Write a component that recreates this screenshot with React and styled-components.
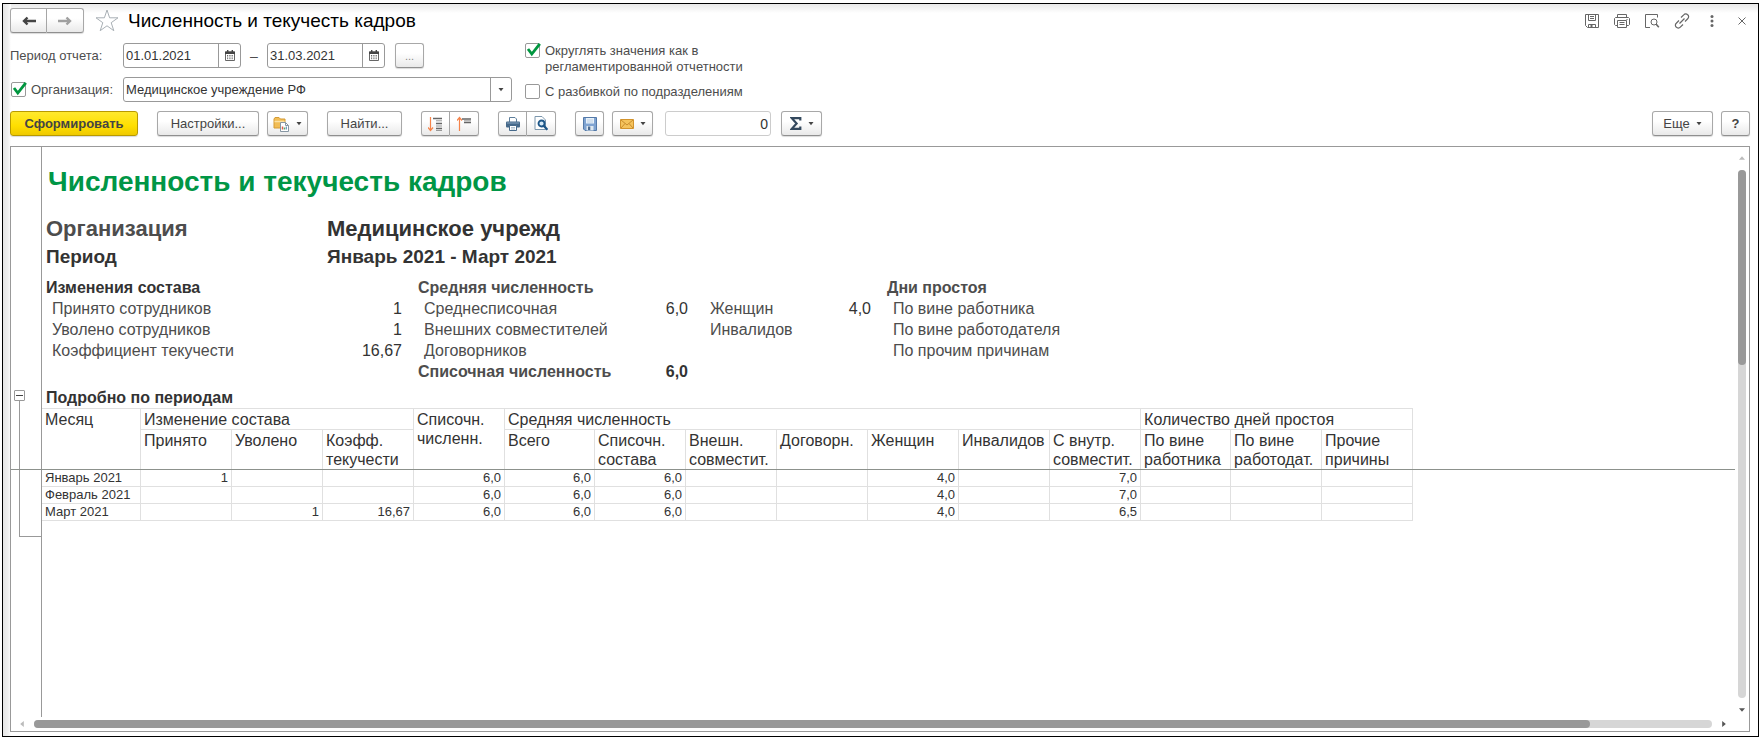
import React, { useState } from 'react'
import styled, { createGlobalStyle, css } from 'styled-components'

const GlobalStyle = createGlobalStyle`
	* {
		box-sizing: border-box;
	}

	body {
		margin: 0;
		background: #fff;
		color: #333;
		font: 14px/16px "Liberation Sans", Arial, sans-serif;
	}

	button, input, select {
		font: inherit;
		color: inherit;
	}
`

const COLUMNS = [99, 91, 91, 91, 91, 90, 91, 91, 91, 91, 91, 91, 90, 91, 91]

const SUBHEADS = [
	['Принято'],
	['Уволено'],
	['Коэфф.', 'текучести'],
	['Всего'],
	['Списочн.', 'состава'],
	['Внешн.', 'совместит.'],
	['Договорн.'],
	['Женщин'],
	['Инвалидов'],
	['С внутр.', 'совместит.'],
	['По вине', 'работника'],
	['По вине', 'работодат.'],
	['Прочие', 'причины'],
]

const ROWS = [
	['Январь 2021', '1', '', '', '6,0', '6,0', '6,0', '', '', '4,0', '', '7,0', '', '', ''],
	['Февраль 2021', '', '', '', '6,0', '6,0', '6,0', '', '', '4,0', '', '7,0', '', '', ''],
	['Март 2021', '', '1', '16,67', '6,0', '6,0', '6,0', '', '', '4,0', '', '6,5', '', '', ''],
]

const ArrowIcon = ({ back }) =>
	<svg width="16" height="12" viewBox="0 0 16 12">
		<path
			d={back ? 'M15 6H3M6.500 2.500L3 6l3.500 3.500' : 'M1 6h12M9.500 2.500L13 6l-3.500 3.500'}
			fill="none" stroke={back ? '#444' : '#a0a0a0'} strokeWidth="2.400"
		/>
	</svg>

const StarIcon = () =>
	<svg width="24" height="23" viewBox="0 0 24 23">
		<path d="M12 1l2.600 7.800h8.400l-6.800 4.900 2.600 8-6.800-4.900-6.800 4.900 2.600-8L1 8.800h8.400z" fill="#fff" stroke="#a9b0b5" />
	</svg>

const CalendarIcon = () =>
	<svg width="10" height="11" viewBox="0 0 10 11">
		<path d="M.5 2h9v8.500h-9z" fill="#fff" stroke="#666" />
		<path d="M0 1.500h10V4H0zM2 0h1.400v2H2zM6.600 0H8v2H6.600z" fill="#444" />
		<path d="M2 5.500h6M2 7h6M2 8.700h6" stroke="#555" strokeWidth=".9" strokeDasharray="1.200 1.100" />
	</svg>

const Caret = () =>
	<svg width="6" height="4" viewBox="0 0 6 4">
		<path d="M.5 0h5L3 3.200z" fill="#444" />
	</svg>

const CheckMark = () =>
	<svg width="16" height="16" viewBox="0 0 16 16">
		<path d="M3 6l3.800 5L14.800.8" fill="none" stroke="#00963f" strokeWidth="2.800" />
	</svg>

const FolderIcon = () =>
	<svg width="17" height="16" viewBox="0 0 17 16">
		<path d="M1 12V3l1-1.500h4L7.500 3H12v9z" fill="#f2bd55" stroke="#d49b35" />
		<path d="M1.500 5.500h10" stroke="#fbe1a4" strokeWidth="1.500" />
		<path d="M7.500 6.500h5l3 3v6h-8z" fill="#fff" stroke="#8796a3" />
		<path d="M12.500 6.500v3h3" fill="none" stroke="#8796a3" />
		<path d="M9.500 13.500v-3" stroke="#e0604d" strokeWidth="1.500" />
		<path d="M11.500 13.500v-2" stroke="#5aa469" strokeWidth="1.500" />
		<path d="M13.300 13.500v-3" stroke="#4d83b5" />
	</svg>

const ExpandIcon = () =>
	<svg width="15" height="16" viewBox="0 0 15 16">
		<path d="M2.500 1v13.500M0 11.500l2.500 3 2.500-3" fill="none" stroke="#f5834a" strokeWidth="1.200" />
		<path d="M5 2.500h9M8 7.500h6M8 12.500h6" stroke="#666" strokeWidth="1.400" />
		<path d="M8 4.800h6M8 10h6M8 14.500h6" stroke="#999" />
	</svg>

const CollapseIcon = () =>
	<svg width="15" height="16" viewBox="0 0 15 16">
		<path d="M2.500 15V1.500M0 4.500l2.500-3 2.500 3" fill="none" stroke="#f5834a" strokeWidth="1.200" />
		<path d="M5 3h9M7 6.500h7" stroke="#666" strokeWidth="1.400" />
		<path d="M7 4.800h7" stroke="#999" />
	</svg>

const PrinterIcon = () =>
	<svg width="14" height="14" viewBox="0 0 14 14">
		<path d="M3.500 5V.5h5.500l1.500 1.500v3" fill="#fff" stroke="#5d7e9b" />
		<rect y="4.500" width="14" height="6" rx="1" fill="#46698a" />
		<path d="M1 6h12" stroke="#86a4bf" />
		<path d="M3.500 8.500h7v5h-7z" fill="#fff" stroke="#46698a" />
		<path d="M5 10.500h4M5 12h4" stroke="#9fb2c3" strokeWidth=".8" />
	</svg>

const PreviewIcon = () =>
	<svg width="14" height="15" viewBox="0 0 14 15">
		<path d="M1 .500h7l3.500 3.500v9.500H1z" fill="#fff" stroke="#7c97ad" />
		<circle cx="7.500" cy="7.500" r="3" fill="#d5e9f7" stroke="#1c5688" strokeWidth="1.800" />
		<path d="M9.800 9.800l3.600 4" stroke="#1c5688" strokeWidth="2.400" />
	</svg>

const FloppyIcon = () =>
	<svg width="14" height="14" viewBox="0 0 14 14">
		<path d="M.500.500h13v13H2L.500 12z" fill="#7fa3d1" stroke="#5379a8" />
		<path d="M3 1h8v5.500H3z" fill="#e7f1fa" />
		<path d="M4 3h6M4 5h6" stroke="#b6c9dc" strokeWidth=".8" />
		<path d="M3.500 9h7v4.500h-7z" fill="#dfe8f0" />
		<path d="M5 9.500h2.300v3.500H5z" fill="#4b6a90" />
	</svg>

const MailIcon = () =>
	<svg width="14" height="10" viewBox="0 0 14 10">
		<path d="M.500.500h13v9H.500z" fill="#f5c35c" stroke="#d3942d" />
		<path d="M1 1l6 5 6-5M1 9l4-4.500M13 9L9 4.500" fill="none" stroke="#c98d2c" />
	</svg>

const SigmaIcon = () =>
	<svg width="12" height="13" viewBox="0 0 12 13">
		<path d="M10.300 3.500V1.200H1.800L6.600 6.500l-4.800 5.300h8.500V9.500" fill="none" stroke="#34495e" strokeWidth="2.200" />
	</svg>

const TitleSave = () =>
	<svg width="16" height="16" viewBox="0 0 16 16" fill="none" stroke="#666">
		<path d="M1.500 1.500h13v13h-11l-2-2zM4.500 1.500v6h7v-6M6 3.500h4M6 5.500h4M4.500 14.500v-3h7v3" />
		<path d="M6.500 12h2v2h-2z" fill="#666" stroke="none" />
	</svg>

const TitlePrint = () =>
	<svg width="16" height="16" viewBox="0 0 16 16" fill="none" stroke="#666">
		<path d="M3.500 4.500v-3h9v3M3.500 12.500h-2l-1-1v-6l1-1h13l1 1v6l-1 1h-2" />
		<path d="M3.500 7.500h9v7h-9zM5.500 9.500h5M5.500 11.500h5M12.500 6.500h1" />
	</svg>

const TitlePreview = () =>
	<svg width="16" height="16" viewBox="0 0 16 16" fill="none" stroke="#666">
		<path d="M6 14.500H1.500v-13h12v3" />
		<circle cx="10" cy="9" r="3" />
		<path d="M12 11l2.800 3.300" strokeWidth="1.600" />
	</svg>

const TitleLink = () =>
	<svg width="16" height="16" viewBox="0 0 16 16" fill="none" stroke="#666" strokeWidth="1.200">
		<path d="M5.500 10.500l5-5M7 4.500l2.700-2.700a2.600 2.600 0 0 1 4 0 2.600 2.600 0 0 1 0 4L11 8.500M9 11.500l-2.700 2.700a2.600 2.600 0 0 1-4 0 2.600 2.600 0 0 1 0-4L5 7.500" />
	</svg>

const TitleMore = () =>
	<svg width="16" height="16" viewBox="0 0 16 16" fill="#666">
		<circle cx="8" cy="3.500" r="1.500" />
		<circle cx="8" cy="8" r="1.500" />
		<circle cx="8" cy="12.500" r="1.500" />
	</svg>

const TitleClose = () =>
	<svg width="16" height="16" viewBox="0 0 16 16" fill="none" stroke="#666">
		<path d="M4.500 4.500l7 7M11.500 4.500l-7 7" />
	</svg>

const Check = ({ id, label, defaultChecked }) => {
	const [checked, setChecked] = useState(Boolean(defaultChecked))

	return (
		<CheckRow htmlFor={id}>
			<CheckBox>
				<input id={id} type="checkbox" checked={checked} onChange={() => setChecked(!checked)} />
				{checked && <CheckMark />}
			</CheckBox>
			<span>{label}</span>
		</CheckRow>
	)
}

const DateField = ({ label, value }) =>
	<DateBox>
		<input type="text" aria-label={label} defaultValue={value} />
		<button type="button" aria-label="Выбрать дату"><CalendarIcon /></button>
	</DateBox>

const Stat = ({ label, value, strong }) =>
	<StatRow $strong={strong}>
		<dt>{label}</dt>
		<dd>{value}</dd>
	</StatRow>

const Report = () =>
	<Sheet>
		<Gutter />
		<Summary>
			<ReportTitle>Численность и текучесть кадров</ReportTitle>
			<Param $size={22} $soft><span>Организация</span><b>Медицинское учрежд</b></Param>
			<Param $size={19}><span>Период</span><b>Январь 2021 - Март 2021</b></Param>
			<Blocks>
				<Block $width={356}>
					<h3>Изменения состава</h3>
					<dl>
						<Stat label="Принято сотрудников" value="1" />
						<Stat label="Уволено сотрудников" value="1" />
						<Stat label="Коэффициент текучести" value="16,67" />
					</dl>
				</Block>
				<Block $width={270} $soft>
					<h3>Средняя численность</h3>
					<dl>
						<Stat label="Среднесписочная" value="6,0" />
						<Stat label="Внешних совместителей" />
						<Stat label="Договорников" />
						<Stat label="Списочная численность" value="6,0" strong />
					</dl>
				</Block>
				<Block $width={167}>
					<h3>&nbsp;</h3>
					<dl>
						<Stat label="Женщин" value="4,0" />
						<Stat label="Инвалидов" />
					</dl>
				</Block>
				<Block $width={200} $soft>
					<h3>Дни простоя</h3>
					<dl>
						<Stat label="По вине работника" />
						<Stat label="По вине работодателя" />
						<Stat label="По прочим причинам" />
					</dl>
				</Block>
			</Blocks>
		</Summary>
		<Gutter>
			<Toggle type="button" aria-label="Свернуть группу" />
			<Bracket />
		</Gutter>
		<Details>
			<h2>Подробно по периодам</h2>
			<TableHolder>
				<Table>
					<colgroup>
						{COLUMNS.map((width, i) => <col key={i} style={{ width }} />)}
					</colgroup>
					<thead>
						<tr>
							<th rowSpan="2">Месяц</th>
							<th colSpan="3">Изменение состава</th>
							<th rowSpan="2">Списочн.<br />численн.</th>
							<th colSpan="7">Средняя численность</th>
							<th colSpan="3">Количество дней простоя</th>
						</tr>
						<tr>
							{SUBHEADS.map((lines, i) =>
								<th key={i}>{lines[0]}{lines[1] && <><br />{lines[1]}</>}</th>
							)}
						</tr>
					</thead>
					<tbody>
						{ROWS.map(row =>
							<tr key={row[0]}>
								{row.map((cell, i) => <td key={i}>{cell}</td>)}
							</tr>
						)}
					</tbody>
				</Table>
				<FreezeLine />
			</TableHolder>
		</Details>
		<Gutter />
	</Sheet>

const App = () =>
	<Window>
		<GlobalStyle />
		<TitleBar>
			<Group>
				<Button type="button" $width={37} aria-label="Назад"><ArrowIcon back /></Button>
				<Button type="button" $width={37} aria-label="Вперед"><ArrowIcon /></Button>
			</Group>
			<Bare type="button" $size={24} aria-label="В избранное"><StarIcon /></Bare>
			<h1>Численность и текучесть кадров</h1>
			<TitleTools>
				<Bare type="button" aria-label="Сохранить"><TitleSave /></Bare>
				<Bare type="button" aria-label="Печать"><TitlePrint /></Bare>
				<Bare type="button" aria-label="Просмотр"><TitlePreview /></Bare>
				<Bare type="button" aria-label="Ссылка"><TitleLink /></Bare>
				<Bare type="button" aria-label="Еще"><TitleMore /></Bare>
				<Bare type="button" aria-label="Закрыть"><TitleClose /></Bare>
			</TitleTools>
		</TitleBar>
		<Filters>
			<Fields>
				<Field>
					<FieldName>Период отчета:</FieldName>
					<DateField label="Начало периода" value="01.01.2021" />
					<Dash>–</Dash>
					<DateField label="Конец периода" value="31.03.2021" />
					<Button type="button" $width={29} $dim>...</Button>
				</Field>
				<Field>
					<FieldName><Check id="by-org" label="Организация:" defaultChecked /></FieldName>
					<Picker>
						<select aria-label="Организация">
							<option>Медицинское учреждение РФ</option>
						</select>
						<i><Caret /></i>
					</Picker>
				</Field>
			</Fields>
			<Options>
				<Check id="round" label={<>Округлять значения как в<br />регламентированной отчетности</>} defaultChecked />
				<Check id="split" label="С разбивкой по подразделениям" />
			</Options>
		</Filters>
		<Toolbar>
			<Button type="button" $width={128} $primary>Сформировать</Button>
			<Button type="button" $width={102}>Настройки...</Button>
			<Button type="button" $width={41} $near aria-label="Варианты"><FolderIcon /><Caret /></Button>
			<Button type="button" $width={75}>Найти...</Button>
			<Group>
				<Button type="button" $width={29} aria-label="Развернуть"><ExpandIcon /></Button>
				<Button type="button" $width={29} aria-label="Свернуть"><CollapseIcon /></Button>
			</Group>
			<Group>
				<Button type="button" $width={29} aria-label="Печать"><PrinterIcon /></Button>
				<Button type="button" $width={29} aria-label="Просмотр"><PreviewIcon /></Button>
			</Group>
			<Button type="button" $width={29} aria-label="Сохранить"><FloppyIcon /></Button>
			<Button type="button" $width={41} $near aria-label="Отправить"><MailIcon /><Caret /></Button>
			<Total type="text" aria-label="Сумма" defaultValue="0" />
			<Button type="button" $width={41} $near aria-label="Функция"><SigmaIcon /><Caret /></Button>
			<Spacer />
			<Button type="button" $width={61}>Еще<Caret /></Button>
			<Button type="button" $width={29} $near $bold>?</Button>
		</Toolbar>
		<Frame>
			<Report />
			<VScroll>
				<Tip $dir="up" $off />
				<Track><Thumb $part={37} /></Track>
				<Tip $dir="down" />
			</VScroll>
			<HScroll>
				<Tip $dir="left" $off />
				<Track $flat><Thumb $part={92.7} /></Track>
				<Tip $dir="right" />
			</HScroll>
		</Frame>
	</Window>

const Window = styled.main`
	display: flex;
	flex-direction: column;
	min-height: calc(100vh - 3px);
	margin: 3px 0 0 2px;
	padding: 4px 8px 4px 7px;
	border: 1px solid #000;
	background:
		linear-gradient(90deg, #e6e6e6, #f0f0f0 5px, #fff 8px) left / 8px 100% no-repeat,
		linear-gradient(180deg, #e9e9e9, #fff) top / 100% 9px no-repeat,
		#fff;
`
const TitleBar = styled.header`
	display: flex;
	align-items: center;
	height: 25px;

	h1 {
		margin: 0 0 0 9px;
		font-weight: 400;
		font-size: 19px;
		line-height: 24px;
		color: #000;
	}
`
const TitleTools = styled.div`
	display: flex;
	gap: 14px;
	margin-left: auto;
`
const Bare = styled.button`
	display: flex;
	align-items: center;
	justify-content: center;
	width: ${({ $size = 16 }) => $size}px;
	margin: 0 0 0 ${({ $size }) => $size ? 11 : 0}px;
	padding: 0;
	border: 0;
	background: none;
`
const Button = styled.button`
	display: flex;
	align-items: center;
	justify-content: center;
	gap: 6px;
	width: ${({ $width }) => $width}px;
	height: 25px;
	margin-left: ${({ $near }) => $near ? -11 : 0}px;
	padding: 0;
	border: 1px solid #a8a8a8;
	border-bottom-color: #8f8f8f;
	border-radius: 3px;
	background: linear-gradient(#fff 40%, #e9e9e9);
	box-shadow: 0 1px 1px rgba(0, 0, 0, .15);
	color: ${({ $dim }) => $dim ? '#888' : '#444'};
	font-size: ${({ $dim }) => $dim ? 11 : 13}px;
	font-weight: ${({ $bold }) => $bold ? 700 : 400};

	${({ $primary }) => $primary && css`
		border-color: #b89a00;
		background: linear-gradient(#ffe92e, #ffdf00 60%, #efc900);
		font-weight: 700;
	`}
`
const Group = styled.div`
	display: flex;

	${Button}:first-child {
		border-radius: 3px 0 0 3px;
	}

	${Button}:last-child {
		border-left: 0;
		border-radius: 0 3px 3px 0;
	}
`
const Filters = styled.section`
	display: flex;
	gap: 12px;
	margin-top: 10px;
	color: #4d4d4d;
`
const Fields = styled.div`
	display: flex;
	flex-direction: column;
	gap: 9px;
	width: 502px;
`
const Field = styled.div`
	display: flex;
	align-items: center;

	> ${Button} {
		margin-left: 10px;
	}
`
const FieldName = styled.div`
	width: 113px;
	font-size: 13px;
	white-space: nowrap;
`
const Options = styled.div`
	display: flex;
	flex-direction: column;
	gap: 9px;
	font-size: 13px;
`
const CheckRow = styled.label`
	display: flex;
	align-items: flex-start;
	gap: 5px;
`
const CheckBox = styled.span`
	position: relative;
	flex: none;
	width: 16px;
	height: 15px;

	input {
		display: block;
		appearance: none;
		width: 15px;
		height: 15px;
		margin: 0 0 0 1px;
		border: 1px solid #999;
		border-radius: 2px;
		background: #fff;
	}

	svg {
		position: absolute;
		top: 0;
		left: 1px;
		pointer-events: none;
	}
`
const boxed = css`
	height: 25px;
	border: 1px solid #999;
	border-radius: 3px;
	background: #fff;
	color: #333;
`
const DateBox = styled.div`
	${boxed}
	display: flex;
	width: 118px;

	input {
		flex: 1;
		min-width: 0;
		padding: 0 0 0 2px;
		border: 0;
		background: none;
		font-size: 13px;
	}

	button {
		display: flex;
		align-items: center;
		justify-content: center;
		width: 22px;
		padding: 0;
		border: 0;
		border-left: 1px solid #999;
		background: none;
	}
`
const Dash = styled.span`
	width: 26px;
	text-align: center;
`
const Picker = styled.div`
	${boxed}
	position: relative;
	flex: 1;

	select {
		appearance: none;
		width: 100%;
		height: 100%;
		padding: 0 24px 0 2px;
		border: 0;
		background: none;
		font-size: 13px;
	}

	i {
		position: absolute;
		top: 0;
		right: 0;
		bottom: 0;
		display: flex;
		align-items: center;
		justify-content: center;
		width: 21px;
		border-left: 1px solid #999;
		pointer-events: none;
	}
`
const Toolbar = styled.div`
	display: flex;
	gap: 19px;
	margin: 9px 0 10px;
`
const Total = styled.input`
	${boxed}
	width: 106px;
	margin: 0 2px 0 -7px;
	padding: 0 2px;
	border-color: #ccc;
	text-align: right;
`
const Spacer = styled.div`
	flex: 1;
`
const Frame = styled.section`
	flex: 1;
	display: grid;
	grid-template: 1fr 14px / 1fr 14px;
	border: 1px solid #999;
	background: #fff;
`
const Sheet = styled.article`
	display: grid;
	grid-template: auto auto 1fr / 31px 1fr;
	min-width: 0;
`
const Gutter = styled.div`
	display: flex;
	flex-direction: column;
	grid-column: 1;
	border-right: 1px solid #999;
`
const Toggle = styled.button`
	width: 11px;
	height: 11px;
	margin: 3px 0 0 3px;
	padding: 0;
	border: 1px solid #999;
	border-radius: 1px;
	background: linear-gradient(#444, #444) center / 7px 1px no-repeat #fff;
`
const Bracket = styled.div`
	flex: 1;
	margin-left: 8px;
	border: solid #999;
	border-width: 0 0 1px 1px;
`
const Summary = styled.div`
	padding: 19px 0 5px 4px;
`
const ReportTitle = styled.h2`
	margin: 0 0 17px 2px;
	font-size: 28px;
	line-height: 32px;
	color: #009646;
`
const Param = styled.div`
	display: flex;
	font-size: ${({ $size }) => $size}px;
	line-height: 28px;
	font-weight: 700;

	span {
		width: 281px;
		color: ${({ $soft }) => $soft ? '#4d4d4d' : '#333'};
	}
`
const Blocks = styled.div`
	display: flex;
	gap: 16px;
	margin-top: 6px;
	font-size: 16px;
	line-height: 21px;
`
const Block = styled.section`
	width: ${({ $width }) => $width}px;

	h3 {
		margin: 0;
		font-size: 16px;
		color: ${({ $soft }) => $soft ? '#4d4d4d' : '#333'};
	}

	dl {
		margin: 0;
	}
`
const StatRow = styled.div`
	display: flex;
	justify-content: space-between;
	padding-left: ${({ $strong }) => $strong ? 0 : 6}px;
	font-weight: ${({ $strong }) => $strong ? 700 : 400};

	dt {
		color: #4d4d4d;
	}

	dd {
		margin: 0;
	}
`
const Details = styled.section`
	padding-bottom: 16px;

	h2 {
		margin: 0;
		padding-left: 4px;
		font-size: 16px;
		line-height: 21px;
	}
`
const TableHolder = styled.div`
	position: relative;
`
const Table = styled.table`
	table-layout: fixed;
	width: 1371px;
	border-collapse: separate;
	border-spacing: 0;
	border-top: 1px solid #e0e0e0;

	th, td {
		padding: 0 3px;
		border: solid #e0e0e0;
		border-width: 0 1px 1px 0;
		font-weight: 400;
		white-space: nowrap;
	}

	th {
		height: 21px;
		padding-top: 1px;
		font-size: 16px;
		line-height: 19px;
		text-align: left;
		vertical-align: top;
	}

	tr + tr th {
		height: 40px;
	}

	td {
		height: 17px;
		font-size: 13px;
		line-height: 16px;
		text-align: right;
	}

	td:first-child {
		text-align: left;
	}
`
const FreezeLine = styled.div`
	position: absolute;
	top: 61px;
	left: -31px;
	right: 0;
	border-top: 1px solid #8c918c;
`
const VScroll = styled.div`
	display: flex;
	flex-direction: column;
	align-items: center;
	padding: 8px 0 4px;
`
const HScroll = styled.div`
	display: flex;
	align-items: center;
	grid-row: 2;
	padding: 0 8px 0 8px;
`
const Track = styled.div`
	flex: 1;
	display: flex;
	flex-direction: ${({ $flat }) => $flat ? 'row' : 'column'};
	${({ $flat }) => $flat ? 'height' : 'width'}: 8px;
	margin: ${({ $flat }) => $flat ? '0 9px' : '9px 0'};
	border-radius: 4px;
	background: #d6d6d6;
`
const Thumb = styled.div`
	flex: 0 0 ${({ $part }) => $part}%;
	border-radius: 4px;
	background: #999;
`
const TIPS = {
	up: 'polygon(50% 20%, 100% 80%, 0 80%)',
	down: 'polygon(0 20%, 100% 20%, 50% 80%)',
	left: 'polygon(80% 0, 80% 100%, 20% 50%)',
	right: 'polygon(20% 0, 80% 50%, 20% 100%)',
}
const Tip = styled.span`
	width: 6px;
	height: 6px;
	background: ${({ $off }) => $off ? '#bbb' : '#555'};
	clip-path: ${({ $dir }) => TIPS[$dir]};
`

export default App
